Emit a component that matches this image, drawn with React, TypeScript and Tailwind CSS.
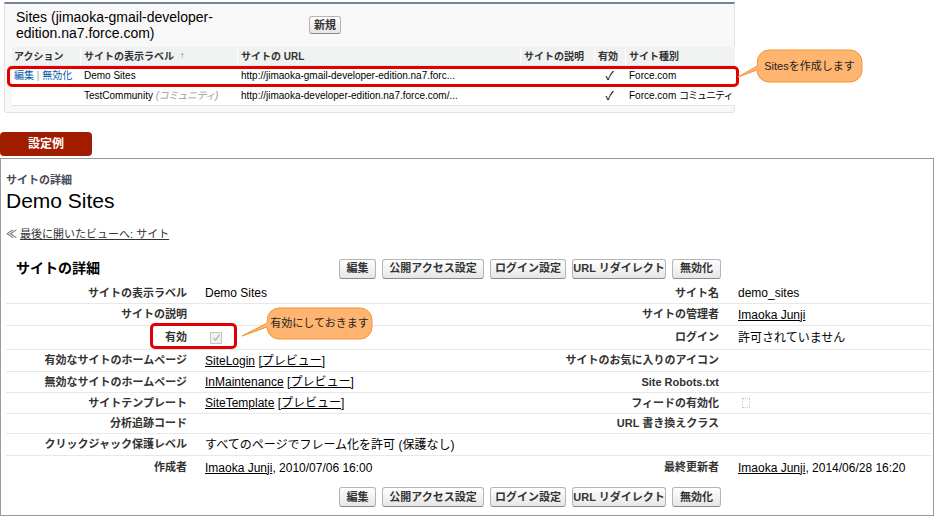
import React from 'react';

type Row = {
  h: string;
  l1: string;
  v1?: React.ReactNode;
  l2: string;
  v2?: React.ReactNode;
};

function Btn({ w, children }: { w: string; children: React.ReactNode }) {
  return (
    <div
      className={`${w} flex h-[20px] items-center justify-center rounded-[3px] border border-[#b5b5b5] border-b-[#8a8a8a] bg-linear-to-b from-white to-[#e6e6e7] text-[11px] font-bold text-[#333]`}
    >
      {children}
    </div>
  );
}

function ButtonRow() {
  return (
    <div className="flex gap-[6px]">
      <Btn w="w-[37px]">編集</Btn>
      <Btn w="w-[102px]">公開アクセス設定</Btn>
      <Btn w="w-[76px]">ログイン設定</Btn>
      <Btn w="w-[94px]">URL リダイレクト</Btn>
      <Btn w="w-[49px]">無効化</Btn>
    </div>
  );
}

function Preview({ name }: { name: string }) {
  return (
    <span>
      <span className="underline">{name}</span> <span className="underline">[プレビュー]</span>
    </span>
  );
}

const rows: Row[] = [
  { h: 'h-[21px]', l1: 'サイトの表示ラベル', v1: 'Demo Sites', l2: 'サイト名', v2: 'demo_sites' },
  { h: 'h-[22px]', l1: 'サイトの説明', l2: 'サイトの管理者', v2: <span className="underline">Imaoka Junji</span> },
  {
    h: 'h-[24px]',
    l1: '有効',
    v1: (
      <div className="ml-[5px] flex h-[12px] w-[12px] items-center justify-center border border-[#c4c4c4] bg-[#f1f1f1]">
        <svg width="9" height="9" viewBox="0 0 9 9">
          <path d="M1.5 4.8 L3.6 7 L7.6 1.6" fill="none" stroke="#b0b0b0" strokeWidth="1.2" />
        </svg>
      </div>
    ),
    l2: 'ログイン',
    v2: '許可されていません',
  },
  { h: 'h-[22px]', l1: '有効なサイトのホームページ', v1: <Preview name="SiteLogin" />, l2: 'サイトのお気に入りのアイコン' },
  { h: 'h-[21px]', l1: '無効なサイトのホームページ', v1: <Preview name="InMaintenance" />, l2: 'Site Robots.txt' },
  {
    h: 'h-[21px]',
    l1: 'サイトテンプレート',
    v1: <Preview name="SiteTemplate" />,
    l2: 'フィードの有効化',
    v2: <div className="ml-[4px] h-[10px] w-[8px] border border-dotted border-[#c8c8c8]" />,
  },
  { h: 'h-[20px]', l1: '分析追跡コード', l2: 'URL 書き換えクラス' },
  { h: 'h-[22px]', l1: 'クリックジャック保護レベル', v1: 'すべてのページでフレーム化を許可 (保護なし)', l2: '' },
  {
    h: 'h-[23px]',
    l1: '作成者',
    v1: (
      <span>
        <span className="underline">Imaoka Junji</span>, 2010/07/06 16:00
      </span>
    ),
    l2: '最終更新者',
    v2: (
      <span>
        <span className="underline">Imaoka Junji</span>, 2014/06/28 16:20
      </span>
    ),
  },
];

const cols = ['w-[68px]', 'w-[157px]', 'w-[283px]', 'w-[74px]', 'w-[31px]', 'w-[110px]'];

function SitesPanel() {
  return (
    <div className="ml-[4px] mt-[2px] w-[731px] rounded-b-[3px] border-x border-b border-t-2 border-[#e0e3e5] border-t-[#75839a] bg-[#f8f8f8] pb-[6px] pt-[5px]">
      <div className="flex items-center">
        <div className="ml-[11px] w-[210px] text-[14px] leading-[16px] text-black">
          Sites (jimaoka-gmail-developer-edition.na7.force.com)
        </div>
        <div className="ml-[83px] flex h-[18px] w-[32px] items-center justify-center rounded-[3px] border border-[#b5b5b5] border-b-[#8a8a8a] bg-linear-to-b from-white to-[#e6e6e7] text-[11px] font-bold text-[#333]">
          新規
        </div>
      </div>
      <div className="ml-[7px] mt-[6px] w-[723px] text-[10px] text-black">
        <div className="flex h-[19px] items-center border-b border-[#e0e3e5] bg-[#f0f1f1] font-bold text-[#333]">
          <div className={`${cols[0]} pl-[2px]`}>アクション</div>
          <div className={`${cols[1]} flex h-full items-center border-l border-white pl-[3px]`}>
            サイトの表示ラベル <span className="ml-[6px] text-[8px] font-normal text-[#666]">↑</span>
          </div>
          <div className={`${cols[2]} flex h-full items-center border-l border-white pl-[3px]`}>サイトの URL</div>
          <div className={`${cols[3]} flex h-full items-center border-l border-white pl-[3px]`}>サイトの説明</div>
          <div className={`${cols[4]} flex h-full items-center border-l border-white pl-[3px]`}>有効</div>
          <div className={`${cols[5]} flex h-full items-center border-l border-white pl-[3px]`}>サイト種別</div>
        </div>
        <div className="flex h-[20px] items-center border-b border-[#e3e3e3] bg-white whitespace-nowrap">
          <div className={`${cols[0]} pl-[2px] text-[#015ba7]`}>
            編集 <span className="text-[#999]">|</span> 無効化
          </div>
          <div className={`${cols[1]} pl-[4px]`}>Demo Sites</div>
          <div className={`${cols[2]} pl-[4px]`}>http://jimaoka-gmail-developer-edition.na7.forc...</div>
          <div className={cols[3]} />
          <div className={`${cols[4]} text-center text-[12px]`}>✓</div>
          <div className={`${cols[5]} pl-[4px]`}>Force.com</div>
        </div>
        <div className="flex h-[20px] items-center border-b border-[#e3e3e3] bg-white whitespace-nowrap">
          <div className={cols[0]} />
          <div className={`${cols[1]} pl-[4px]`}>
            TestCommunity <span className="italic tracking-[-0.5px] text-[#999]">(コミュニティ)</span>
          </div>
          <div className={`${cols[2]} pl-[4px]`}>http://jimaoka-developer-edition.na7.force.com/...</div>
          <div className={cols[3]} />
          <div className={`${cols[4]} text-center text-[12px]`}>✓</div>
          <div className={`${cols[5]} pl-[4px]`}>
            Force.com <span className="tracking-[-1px]">コミュニティ</span>
          </div>
        </div>
      </div>
    </div>
  );
}

function DetailPanel() {
  return (
    <div className="mt-[2px] h-[358px] w-[934px] border border-[#9a9a9a] bg-white pl-[5px] pt-[14px]">
      <div className="text-[11px] font-bold leading-[14px] text-[#4a4a56]">サイトの詳細</div>
      <div className="mt-[2px] text-[21px] leading-[24px] text-black">Demo Sites</div>
      <div className="mt-[14px] text-[11px] leading-[14px] text-[#333]">
        ≪ <span className="underline">最後に開いたビューへ: サイト</span>
      </div>
      <div className="mt-[17px] flex items-center">
        <div className="w-[333px] pl-[10px] text-[14px] font-bold text-black">サイトの詳細</div>
        <ButtonRow />
      </div>
      <div className="mt-[4px] w-[926px]">
        {rows.map((r, i) => (
          <div
            key={i}
            className={`${r.h} grid grid-cols-[181px_331px_201px_1fr] items-center ${i < rows.length - 1 ? 'border-b border-[#e8e8e8]' : ''}`}
          >
            <div className="text-right text-[11px] font-bold text-[#333]">{r.l1}</div>
            <div className="pl-[18px] text-[12px] text-black whitespace-nowrap">{r.v1}</div>
            <div className="text-right text-[11px] font-bold text-[#333] whitespace-nowrap">{r.l2}</div>
            <div className="pl-[19px] text-[12px] text-black whitespace-nowrap">{r.v2}</div>
          </div>
        ))}
      </div>
      <div className="mt-[8px] flex">
        <div className="w-[333px]" />
        <ButtonRow />
      </div>
    </div>
  );
}

export default function App() {
  return (
    <div className="relative h-[517px] w-[935px] overflow-hidden bg-white font-['Liberation_Sans','Noto_Sans_CJK_JP',sans-serif]">
      <SitesPanel />
      <div className="mt-[19px] flex h-[24px] w-[92px] items-center justify-center rounded-[4px] bg-[#a21d00] text-[12px] font-bold text-white">
        設定例
      </div>
      <DetailPanel />

      {/* annotations */}
      <div className="absolute left-[7px] top-[66px] h-[21px] w-[732px] rounded-[5px] border-[3px] border-[#e00000]" />
      <div className="absolute left-[150px] top-[323px] h-[26px] w-[87px] rounded-[5px] border-[3px] border-[#e00000]" />
      <svg className="pointer-events-none absolute left-0 top-0" width="935" height="517" viewBox="0 0 935 517">
        <path
          d="M769 50 H850 A12 12 0 0 1 862 62 V70 A12 12 0 0 1 850 82 H769 A12 12 0 0 1 757 70 L738 77 L757.3 66 V62 A12 12 0 0 1 769 50 Z"
          fill="#ffb570"
          stroke="#f39333"
          strokeWidth="1"
        />
        <path
          d="M279 308 H360 A12 12 0 0 1 372 320 V327 A12 12 0 0 1 360 339 H279 A12 12 0 0 1 267 327 L242 336 L267.3 323 V320 A12 12 0 0 1 279 308 Z"
          fill="#ffb570"
          stroke="#f39333"
          strokeWidth="1"
        />
      </svg>
      <div className="absolute left-[757px] top-[50px] flex h-[32px] w-[105px] items-center justify-center text-[11px] text-[#222]">
        Sitesを作成します
      </div>
      <div className="absolute left-[267px] top-[308px] flex h-[31px] w-[105px] items-center justify-center text-[11px] text-[#222]">
        有効にしておきます
      </div>
    </div>
  );
}
